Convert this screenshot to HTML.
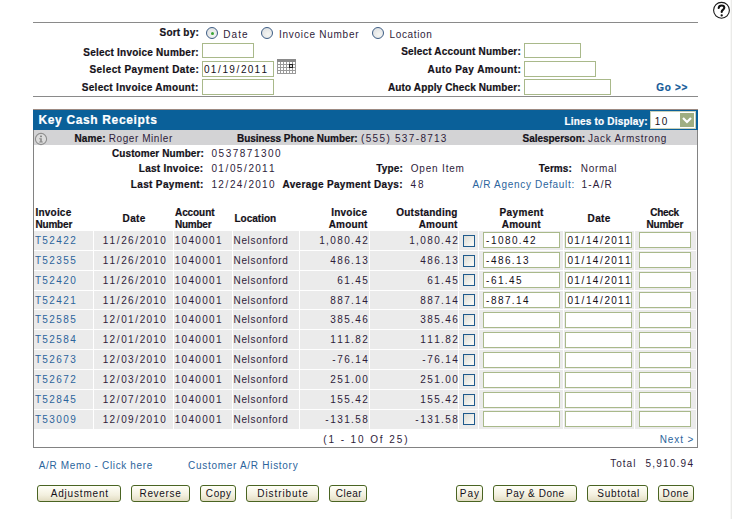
<!DOCTYPE html><html><head><meta charset="utf-8"><style>
html,body{margin:0;padding:0;background:#fff;width:732px;height:519px;overflow:hidden;position:relative}
*{box-sizing:border-box}
.t{position:absolute;font-family:"Liberation Sans",sans-serif;line-height:20px;white-space:pre}
.b{position:absolute}
.inp{position:absolute;border:1px solid #a9b98a;background:#fff}
.cb{position:absolute;width:12px;height:12px;border:1px solid #1f5a8c;background:linear-gradient(135deg,#dcdcd6,#f6f6f2 80%)}
.btn{position:absolute;height:17px;border:1px solid #4a6422;border-radius:3px;background:linear-gradient(#fffff8,#f3f0df 60%,#e2dcc2)}
.cell{position:absolute;background:#ebebeb}
.rad{position:absolute;width:12px;height:12px;border-radius:50%;border:1px solid #3d5d84;background:radial-gradient(circle at 60% 65%,#f6f6f2,#d8dce0)}
</style></head><body>

<div class="b" style="left:731px;top:0;width:1px;height:519px;background:#ebebe9"></div><div class="b" style="left:730px;top:0;width:1px;height:519px;background:#f8f8f7"></div>
<svg style="position:absolute;left:712px;top:1px" width="20" height="20"><circle cx="9.5" cy="9.3" r="7.9" fill="#fff" stroke="#1a1a1a" stroke-width="1.1"/><path d="M6.7 7.0 C6.9 5.1 8.2 4.5 9.6 4.5 C11.2 4.5 12.3 5.5 12.3 6.8 C12.3 8.5 10.0 8.6 9.7 10.6 L9.7 10.9" fill="none" stroke="#111" stroke-width="2.1" stroke-linecap="round"/><circle cx="9.7" cy="14.4" r="1.15" fill="#111"/></svg>
<div class="b" style="left:33px;top:22px;width:665px;height:1px;background:#8a8a8a"></div>
<div class="b" style="left:33px;top:96px;width:665px;height:1px;background:#8a8a8a"></div>
<div class="rad" style="left:206px;top:27px"></div>
<div class="b" style="left:210.5px;top:31.5px;width:3px;height:3px;border-radius:50%;background:#3aa534"></div>
<div class="rad" style="left:261px;top:27px"></div>
<div class="rad" style="left:372px;top:27px"></div>
<div class="inp" style="left:202px;top:43px;width:52px;height:15px"></div>
<div class="inp" style="left:202px;top:61px;width:72px;height:16px"></div>
<div class="inp" style="left:202px;top:79px;width:72px;height:16px"></div>
<div class="inp" style="left:524px;top:43px;width:57px;height:15px"></div>
<div class="inp" style="left:524px;top:61px;width:72px;height:16px"></div>
<div class="inp" style="left:524px;top:79px;width:87px;height:16px"></div>
<svg style="position:absolute;left:277px;top:59px" width="19" height="15" shape-rendering="crispEdges"><rect x="0" y="0" width="19" height="15" fill="#9a9a9a"/><rect x="0" y="0" width="19" height="3" fill="#8a8a8a"/><rect x="1" y="3" width="2" height="2" fill="#fff"/><rect x="1" y="6" width="2" height="2" fill="#fff"/><rect x="1" y="9" width="2" height="2" fill="#fff"/><rect x="1" y="12" width="2" height="2" fill="#fff"/><rect x="4" y="3" width="2" height="2" fill="#fff"/><rect x="4" y="6" width="2" height="2" fill="#fff"/><rect x="4" y="9" width="2" height="2" fill="#fff"/><rect x="4" y="12" width="2" height="2" fill="#fff"/><rect x="7" y="3" width="2" height="2" fill="#fff"/><rect x="7" y="6" width="2" height="2" fill="#fff"/><rect x="7" y="9" width="2" height="2" fill="#fff"/><rect x="7" y="12" width="2" height="2" fill="#fff"/><rect x="10" y="3" width="2" height="2" fill="#fff"/><rect x="10" y="6" width="2" height="2" fill="#fff"/><rect x="10" y="9" width="2" height="2" fill="#fff"/><rect x="10" y="12" width="2" height="2" fill="#fff"/><rect x="13" y="3" width="2" height="2" fill="#fff"/><rect x="13" y="6" width="2" height="2" fill="#fff"/><rect x="13" y="9" width="2" height="2" fill="#fff"/><rect x="13" y="12" width="2" height="2" fill="#fff"/><rect x="16" y="3" width="2" height="2" fill="#fff"/><rect x="16" y="6" width="2" height="2" fill="#fff"/><rect x="16" y="9" width="2" height="2" fill="#fff"/><rect x="16" y="12" width="2" height="2" fill="#fff"/><rect x="12" y="5" width="4" height="4" fill="#222"/><rect x="13" y="6" width="2" height="2" fill="#ddd"/></svg>
<div class="b" style="left:33px;top:109px;width:665px;height:339px;border:1px solid #828282;border-top:none"></div>
<div class="b" style="left:33px;top:109px;width:665px;height:21px;background:#0a6099"></div>
<div class="b" style="left:33px;top:109px;width:665px;height:1px;background:#9c8a82"></div>
<div class="b" style="left:34px;top:130px;width:663px;height:15px;background:#d3d3d5"></div>
<div class="b" style="left:650px;top:111px;width:46px;height:18px;background:#fff;border:1px solid #c8d0b8"></div>
<div class="b" style="left:680px;top:113px;width:14px;height:14px;background:#9fae82"></div>
<svg class="b" style="position:absolute;left:680px;top:113px" width="14" height="14"><path d="M3 5 L7 9 L11 5" stroke="#fff" stroke-width="2.2" fill="none"/></svg>
<svg style="position:absolute;left:34px;top:132px" width="14" height="14"><circle cx="7" cy="7" r="5.6" fill="#dcdcdc" stroke="#8e8e8e" stroke-width="1.1"/><rect x="6" y="3.6" width="2" height="1.6" fill="#8a8a8a"/><path d="M5.2 6.2 H7.8 V9.6 H8.8 V10.6 H5.2 V9.6 H6.2 V7.2 H5.2 Z" fill="#8a8a8a"/></svg>
<div class="cell" style="left:34px;top:231px;width:59px;height:19px"></div>
<div class="cell" style="left:94px;top:231px;width:79px;height:19px"></div>
<div class="cell" style="left:174px;top:231px;width:58px;height:19px"></div>
<div class="cell" style="left:233px;top:231px;width:66px;height:19px"></div>
<div class="cell" style="left:300px;top:231px;width:69px;height:19px"></div>
<div class="cell" style="left:370px;top:231px;width:88px;height:19px"></div>
<div class="cell" style="left:459px;top:231px;width:19px;height:19px"></div>
<div class="cell" style="left:479px;top:231px;width:84px;height:19px"></div>
<div class="cell" style="left:564px;top:231px;width:70px;height:19px"></div>
<div class="cell" style="left:635px;top:231px;width:61px;height:19px"></div>
<div class="cb" style="left:463px;top:235px"></div>
<div class="inp" style="left:483px;top:232px;width:77px;height:16px"></div>
<div class="inp" style="left:565px;top:232px;width:67px;height:16px"></div>
<div class="inp" style="left:639px;top:232px;width:52px;height:16px"></div>
<div class="cell" style="left:34px;top:251px;width:59px;height:19px"></div>
<div class="cell" style="left:94px;top:251px;width:79px;height:19px"></div>
<div class="cell" style="left:174px;top:251px;width:58px;height:19px"></div>
<div class="cell" style="left:233px;top:251px;width:66px;height:19px"></div>
<div class="cell" style="left:300px;top:251px;width:69px;height:19px"></div>
<div class="cell" style="left:370px;top:251px;width:88px;height:19px"></div>
<div class="cell" style="left:459px;top:251px;width:19px;height:19px"></div>
<div class="cell" style="left:479px;top:251px;width:84px;height:19px"></div>
<div class="cell" style="left:564px;top:251px;width:70px;height:19px"></div>
<div class="cell" style="left:635px;top:251px;width:61px;height:19px"></div>
<div class="cb" style="left:463px;top:255px"></div>
<div class="inp" style="left:483px;top:252px;width:77px;height:16px"></div>
<div class="inp" style="left:565px;top:252px;width:67px;height:16px"></div>
<div class="inp" style="left:639px;top:252px;width:52px;height:16px"></div>
<div class="cell" style="left:34px;top:271px;width:59px;height:19px"></div>
<div class="cell" style="left:94px;top:271px;width:79px;height:19px"></div>
<div class="cell" style="left:174px;top:271px;width:58px;height:19px"></div>
<div class="cell" style="left:233px;top:271px;width:66px;height:19px"></div>
<div class="cell" style="left:300px;top:271px;width:69px;height:19px"></div>
<div class="cell" style="left:370px;top:271px;width:88px;height:19px"></div>
<div class="cell" style="left:459px;top:271px;width:19px;height:19px"></div>
<div class="cell" style="left:479px;top:271px;width:84px;height:19px"></div>
<div class="cell" style="left:564px;top:271px;width:70px;height:19px"></div>
<div class="cell" style="left:635px;top:271px;width:61px;height:19px"></div>
<div class="cb" style="left:463px;top:274px"></div>
<div class="inp" style="left:483px;top:272px;width:77px;height:16px"></div>
<div class="inp" style="left:565px;top:272px;width:67px;height:16px"></div>
<div class="inp" style="left:639px;top:272px;width:52px;height:16px"></div>
<div class="cell" style="left:34px;top:291px;width:59px;height:18px"></div>
<div class="cell" style="left:94px;top:291px;width:79px;height:18px"></div>
<div class="cell" style="left:174px;top:291px;width:58px;height:18px"></div>
<div class="cell" style="left:233px;top:291px;width:66px;height:18px"></div>
<div class="cell" style="left:300px;top:291px;width:69px;height:18px"></div>
<div class="cell" style="left:370px;top:291px;width:88px;height:18px"></div>
<div class="cell" style="left:459px;top:291px;width:19px;height:18px"></div>
<div class="cell" style="left:479px;top:291px;width:84px;height:18px"></div>
<div class="cell" style="left:564px;top:291px;width:70px;height:18px"></div>
<div class="cell" style="left:635px;top:291px;width:61px;height:18px"></div>
<div class="cb" style="left:463px;top:294px"></div>
<div class="inp" style="left:483px;top:292px;width:77px;height:16px"></div>
<div class="inp" style="left:565px;top:292px;width:67px;height:16px"></div>
<div class="inp" style="left:639px;top:292px;width:52px;height:16px"></div>
<div class="cell" style="left:34px;top:310px;width:59px;height:19px"></div>
<div class="cell" style="left:94px;top:310px;width:79px;height:19px"></div>
<div class="cell" style="left:174px;top:310px;width:58px;height:19px"></div>
<div class="cell" style="left:233px;top:310px;width:66px;height:19px"></div>
<div class="cell" style="left:300px;top:310px;width:69px;height:19px"></div>
<div class="cell" style="left:370px;top:310px;width:88px;height:19px"></div>
<div class="cell" style="left:459px;top:310px;width:19px;height:19px"></div>
<div class="cell" style="left:479px;top:310px;width:84px;height:19px"></div>
<div class="cell" style="left:564px;top:310px;width:70px;height:19px"></div>
<div class="cell" style="left:635px;top:310px;width:61px;height:19px"></div>
<div class="cb" style="left:463px;top:314px"></div>
<div class="inp" style="left:483px;top:312px;width:77px;height:16px"></div>
<div class="inp" style="left:565px;top:312px;width:67px;height:16px"></div>
<div class="inp" style="left:639px;top:312px;width:52px;height:16px"></div>
<div class="cell" style="left:34px;top:330px;width:59px;height:19px"></div>
<div class="cell" style="left:94px;top:330px;width:79px;height:19px"></div>
<div class="cell" style="left:174px;top:330px;width:58px;height:19px"></div>
<div class="cell" style="left:233px;top:330px;width:66px;height:19px"></div>
<div class="cell" style="left:300px;top:330px;width:69px;height:19px"></div>
<div class="cell" style="left:370px;top:330px;width:88px;height:19px"></div>
<div class="cell" style="left:459px;top:330px;width:19px;height:19px"></div>
<div class="cell" style="left:479px;top:330px;width:84px;height:19px"></div>
<div class="cell" style="left:564px;top:330px;width:70px;height:19px"></div>
<div class="cell" style="left:635px;top:330px;width:61px;height:19px"></div>
<div class="cb" style="left:463px;top:334px"></div>
<div class="inp" style="left:483px;top:332px;width:77px;height:16px"></div>
<div class="inp" style="left:565px;top:332px;width:67px;height:16px"></div>
<div class="inp" style="left:639px;top:332px;width:52px;height:16px"></div>
<div class="cell" style="left:34px;top:350px;width:59px;height:19px"></div>
<div class="cell" style="left:94px;top:350px;width:79px;height:19px"></div>
<div class="cell" style="left:174px;top:350px;width:58px;height:19px"></div>
<div class="cell" style="left:233px;top:350px;width:66px;height:19px"></div>
<div class="cell" style="left:300px;top:350px;width:69px;height:19px"></div>
<div class="cell" style="left:370px;top:350px;width:88px;height:19px"></div>
<div class="cell" style="left:459px;top:350px;width:19px;height:19px"></div>
<div class="cell" style="left:479px;top:350px;width:84px;height:19px"></div>
<div class="cell" style="left:564px;top:350px;width:70px;height:19px"></div>
<div class="cell" style="left:635px;top:350px;width:61px;height:19px"></div>
<div class="cb" style="left:463px;top:354px"></div>
<div class="inp" style="left:483px;top:352px;width:77px;height:16px"></div>
<div class="inp" style="left:565px;top:352px;width:67px;height:16px"></div>
<div class="inp" style="left:639px;top:352px;width:52px;height:16px"></div>
<div class="cell" style="left:34px;top:370px;width:59px;height:19px"></div>
<div class="cell" style="left:94px;top:370px;width:79px;height:19px"></div>
<div class="cell" style="left:174px;top:370px;width:58px;height:19px"></div>
<div class="cell" style="left:233px;top:370px;width:66px;height:19px"></div>
<div class="cell" style="left:300px;top:370px;width:69px;height:19px"></div>
<div class="cell" style="left:370px;top:370px;width:88px;height:19px"></div>
<div class="cell" style="left:459px;top:370px;width:19px;height:19px"></div>
<div class="cell" style="left:479px;top:370px;width:84px;height:19px"></div>
<div class="cell" style="left:564px;top:370px;width:70px;height:19px"></div>
<div class="cell" style="left:635px;top:370px;width:61px;height:19px"></div>
<div class="cb" style="left:463px;top:374px"></div>
<div class="inp" style="left:483px;top:372px;width:77px;height:16px"></div>
<div class="inp" style="left:565px;top:372px;width:67px;height:16px"></div>
<div class="inp" style="left:639px;top:372px;width:52px;height:16px"></div>
<div class="cell" style="left:34px;top:390px;width:59px;height:19px"></div>
<div class="cell" style="left:94px;top:390px;width:79px;height:19px"></div>
<div class="cell" style="left:174px;top:390px;width:58px;height:19px"></div>
<div class="cell" style="left:233px;top:390px;width:66px;height:19px"></div>
<div class="cell" style="left:300px;top:390px;width:69px;height:19px"></div>
<div class="cell" style="left:370px;top:390px;width:88px;height:19px"></div>
<div class="cell" style="left:459px;top:390px;width:19px;height:19px"></div>
<div class="cell" style="left:479px;top:390px;width:84px;height:19px"></div>
<div class="cell" style="left:564px;top:390px;width:70px;height:19px"></div>
<div class="cell" style="left:635px;top:390px;width:61px;height:19px"></div>
<div class="cb" style="left:463px;top:394px"></div>
<div class="inp" style="left:483px;top:392px;width:77px;height:16px"></div>
<div class="inp" style="left:565px;top:392px;width:67px;height:16px"></div>
<div class="inp" style="left:639px;top:392px;width:52px;height:16px"></div>
<div class="cell" style="left:34px;top:410px;width:59px;height:19px"></div>
<div class="cell" style="left:94px;top:410px;width:79px;height:19px"></div>
<div class="cell" style="left:174px;top:410px;width:58px;height:19px"></div>
<div class="cell" style="left:233px;top:410px;width:66px;height:19px"></div>
<div class="cell" style="left:300px;top:410px;width:69px;height:19px"></div>
<div class="cell" style="left:370px;top:410px;width:88px;height:19px"></div>
<div class="cell" style="left:459px;top:410px;width:19px;height:19px"></div>
<div class="cell" style="left:479px;top:410px;width:84px;height:19px"></div>
<div class="cell" style="left:564px;top:410px;width:70px;height:19px"></div>
<div class="cell" style="left:635px;top:410px;width:61px;height:19px"></div>
<div class="cb" style="left:463px;top:413px"></div>
<div class="inp" style="left:483px;top:411px;width:77px;height:16px"></div>
<div class="inp" style="left:565px;top:411px;width:67px;height:16px"></div>
<div class="inp" style="left:639px;top:411px;width:52px;height:16px"></div>
<div class="btn" style="left:37px;top:485px;width:84px"></div>
<div class="btn" style="left:131px;top:485px;width:59px"></div>
<div class="btn" style="left:200px;top:485px;width:36px"></div>
<div class="btn" style="left:246px;top:485px;width:73px"></div>
<div class="btn" style="left:329px;top:485px;width:38px"></div>
<div class="btn" style="left:456px;top:485px;width:27px"></div>
<div class="btn" style="left:493px;top:485px;width:84px"></div>
<div class="btn" style="left:587px;top:485px;width:61px"></div>
<div class="btn" style="left:658px;top:485px;width:36px"></div>
<div style="position:absolute;left:159.50px;top:23.25px;font-family:'Liberation Sans';font-size:10px;line-height:20px;white-space:pre;color:#141018;font-weight:bold;-webkit-text-stroke:0.2px #141018;letter-spacing:0.214px;">Sort by:</div>
<div style="position:absolute;left:223.25px;top:24.50px;font-family:'Liberation Sans';font-size:10px;line-height:20px;white-space:pre;color:#2e1c3a;letter-spacing:1.083px;">Date</div>
<div style="position:absolute;left:279.00px;top:25.00px;font-family:'Liberation Sans';font-size:10px;line-height:20px;white-space:pre;color:#2e1c3a;letter-spacing:0.731px;">Invoice Number</div>
<div style="position:absolute;left:389.50px;top:25.00px;font-family:'Liberation Sans';font-size:10px;line-height:20px;white-space:pre;color:#2e1c3a;letter-spacing:0.643px;">Location</div>
<div style="position:absolute;left:83.25px;top:42.50px;font-family:'Liberation Sans';font-size:10px;line-height:20px;white-space:pre;color:#141018;font-weight:bold;-webkit-text-stroke:0.2px #141018;letter-spacing:0.226px;">Select Invoice Number:</div>
<div style="position:absolute;left:89.50px;top:60.25px;font-family:'Liberation Sans';font-size:10px;line-height:20px;white-space:pre;color:#141018;font-weight:bold;-webkit-text-stroke:0.2px #141018;letter-spacing:0.395px;">Select Payment Date:</div>
<div style="position:absolute;left:81.75px;top:78.25px;font-family:'Liberation Sans';font-size:10px;line-height:20px;white-space:pre;color:#141018;font-weight:bold;-webkit-text-stroke:0.2px #141018;letter-spacing:0.298px;">Select Invoice Amount:</div>
<div style="position:absolute;left:401.25px;top:42.00px;font-family:'Liberation Sans';font-size:10px;line-height:20px;white-space:pre;color:#141018;font-weight:bold;-webkit-text-stroke:0.2px #141018;letter-spacing:0.179px;">Select Account Number:</div>
<div style="position:absolute;left:427.50px;top:60.00px;font-family:'Liberation Sans';font-size:10px;line-height:20px;white-space:pre;color:#141018;font-weight:bold;-webkit-text-stroke:0.2px #141018;letter-spacing:0.433px;">Auto Pay Amount:</div>
<div style="position:absolute;left:388.00px;top:78.25px;font-family:'Liberation Sans';font-size:10px;line-height:20px;white-space:pre;color:#141018;font-weight:bold;-webkit-text-stroke:0.2px #141018;letter-spacing:0.130px;">Auto Apply Check Number:</div>
<div style="position:absolute;left:203.25px;top:59.50px;font-family:'Liberation Sans';font-size:10px;line-height:20px;white-space:pre;color:#141018;"><span style="display:inline-block;width:6.836px;text-align:center">0</span><span style="display:inline-block;width:6.836px;text-align:center">1</span><span style="display:inline-block;width:4.883px;text-align:center">/</span><span style="display:inline-block;width:6.836px;text-align:center">1</span><span style="display:inline-block;width:6.836px;text-align:center">9</span><span style="display:inline-block;width:4.883px;text-align:center">/</span><span style="display:inline-block;width:6.836px;text-align:center">2</span><span style="display:inline-block;width:6.836px;text-align:center">0</span><span style="display:inline-block;width:6.836px;text-align:center">1</span><span style="display:inline-block;width:6.836px;text-align:center">1</span></div>
<div style="position:absolute;left:656.25px;top:77.75px;font-family:'Liberation Sans';font-size:10px;line-height:20px;white-space:pre;color:#145a98;font-weight:bold;-webkit-text-stroke:0.2px #145a98;letter-spacing:0.688px;">Go &gt;&gt;</div>
<div style="position:absolute;left:38.50px;top:110.25px;font-family:'Liberation Sans';font-size:12px;line-height:20px;white-space:pre;color:#ffffff;font-weight:bold;-webkit-text-stroke:0.2px #ffffff;letter-spacing:0.641px;">Key Cash Receipts</div>
<div style="position:absolute;left:564.50px;top:112.00px;font-family:'Liberation Sans';font-size:10px;line-height:20px;white-space:pre;color:#ffffff;font-weight:bold;-webkit-text-stroke:0.2px #ffffff;letter-spacing:0.188px;">Lines to Display:</div>
<div style="position:absolute;left:654.00px;top:111.60px;font-family:'Liberation Sans';font-size:10px;line-height:20px;white-space:pre;color:#141018;"><span style="display:inline-block;width:7.000px;text-align:center">1</span><span style="display:inline-block;width:7.000px;text-align:center">0</span></div>
<div style="position:absolute;left:74.50px;top:128.75px;font-family:'Liberation Sans';font-size:10px;line-height:20px;white-space:pre;color:#141018;font-weight:bold;-webkit-text-stroke:0.2px #141018;letter-spacing:0.125px;">Name:</div>
<div style="position:absolute;left:108.75px;top:128.75px;font-family:'Liberation Sans';font-size:10px;line-height:20px;white-space:pre;color:#2e1c3a;letter-spacing:0.568px;">Roger Minler</div>
<div style="position:absolute;left:237.00px;top:128.75px;font-family:'Liberation Sans';font-size:10px;line-height:20px;white-space:pre;color:#141018;font-weight:bold;-webkit-text-stroke:0.2px #141018;letter-spacing:-0.048px;">Business Phone Number:</div>
<div style="position:absolute;left:360.25px;top:128.75px;font-family:'Liberation Sans';font-size:10px;line-height:20px;white-space:pre;color:#2e1c3a;"><span style="display:inline-block;width:4.885px;text-align:center">(</span><span style="display:inline-block;width:6.839px;text-align:center">5</span><span style="display:inline-block;width:6.839px;text-align:center">5</span><span style="display:inline-block;width:6.839px;text-align:center">5</span><span style="display:inline-block;width:4.885px;text-align:center">)</span><span style="display:inline-block;width:3.908px;text-align:center"> </span><span style="display:inline-block;width:6.839px;text-align:center">5</span><span style="display:inline-block;width:6.839px;text-align:center">3</span><span style="display:inline-block;width:6.839px;text-align:center">7</span><span style="display:inline-block;width:4.885px;text-align:center">-</span><span style="display:inline-block;width:6.839px;text-align:center">8</span><span style="display:inline-block;width:6.839px;text-align:center">7</span><span style="display:inline-block;width:6.839px;text-align:center">1</span><span style="display:inline-block;width:6.839px;text-align:center">3</span></div>
<div style="position:absolute;left:522.50px;top:128.75px;font-family:'Liberation Sans';font-size:10px;line-height:20px;white-space:pre;color:#141018;font-weight:bold;-webkit-text-stroke:0.2px #141018;letter-spacing:-0.023px;">Salesperson:</div>
<div style="position:absolute;left:588.00px;top:128.75px;font-family:'Liberation Sans';font-size:10px;line-height:20px;white-space:pre;color:#2e1c3a;letter-spacing:0.731px;">Jack Armstrong</div>
<div style="position:absolute;left:112.00px;top:143.75px;font-family:'Liberation Sans';font-size:10px;line-height:20px;white-space:pre;color:#141018;font-weight:bold;-webkit-text-stroke:0.2px #141018;letter-spacing:0.083px;">Customer Number:</div>
<div style="position:absolute;left:210.75px;top:144.00px;font-family:'Liberation Sans';font-size:10px;line-height:20px;white-space:pre;color:#2e1c3a;"><span style="display:inline-block;width:7.077px;text-align:center">0</span><span style="display:inline-block;width:7.077px;text-align:center">5</span><span style="display:inline-block;width:7.077px;text-align:center">3</span><span style="display:inline-block;width:7.077px;text-align:center">7</span><span style="display:inline-block;width:7.077px;text-align:center">8</span><span style="display:inline-block;width:7.077px;text-align:center">7</span><span style="display:inline-block;width:7.077px;text-align:center">1</span><span style="display:inline-block;width:7.077px;text-align:center">3</span><span style="display:inline-block;width:7.077px;text-align:center">0</span><span style="display:inline-block;width:7.077px;text-align:center">0</span></div>
<div style="position:absolute;left:138.75px;top:159.00px;font-family:'Liberation Sans';font-size:10px;line-height:20px;white-space:pre;color:#141018;font-weight:bold;-webkit-text-stroke:0.2px #141018;letter-spacing:0.271px;">Last Invoice:</div>
<div style="position:absolute;left:210.75px;top:159.00px;font-family:'Liberation Sans';font-size:10px;line-height:20px;white-space:pre;color:#2e1c3a;"><span style="display:inline-block;width:6.836px;text-align:center">0</span><span style="display:inline-block;width:6.836px;text-align:center">1</span><span style="display:inline-block;width:4.883px;text-align:center">/</span><span style="display:inline-block;width:6.836px;text-align:center">0</span><span style="display:inline-block;width:6.836px;text-align:center">5</span><span style="display:inline-block;width:4.883px;text-align:center">/</span><span style="display:inline-block;width:6.836px;text-align:center">2</span><span style="display:inline-block;width:6.836px;text-align:center">0</span><span style="display:inline-block;width:6.836px;text-align:center">1</span><span style="display:inline-block;width:6.836px;text-align:center">1</span></div>
<div style="position:absolute;left:376.25px;top:159.00px;font-family:'Liberation Sans';font-size:10px;line-height:20px;white-space:pre;color:#141018;font-weight:bold;-webkit-text-stroke:0.2px #141018;letter-spacing:0.188px;">Type:</div>
<div style="position:absolute;left:410.75px;top:159.00px;font-family:'Liberation Sans';font-size:10px;line-height:20px;white-space:pre;color:#2e1c3a;letter-spacing:0.812px;">Open Item</div>
<div style="position:absolute;left:538.75px;top:159.00px;font-family:'Liberation Sans';font-size:10px;line-height:20px;white-space:pre;color:#141018;font-weight:bold;-webkit-text-stroke:0.2px #141018;letter-spacing:0.100px;">Terms:</div>
<div style="position:absolute;left:580.75px;top:159.00px;font-family:'Liberation Sans';font-size:10px;line-height:20px;white-space:pre;color:#2e1c3a;letter-spacing:0.700px;">Normal</div>
<div style="position:absolute;left:130.75px;top:175.00px;font-family:'Liberation Sans';font-size:10px;line-height:20px;white-space:pre;color:#141018;font-weight:bold;-webkit-text-stroke:0.2px #141018;letter-spacing:0.354px;">Last Payment:</div>
<div style="position:absolute;left:210.75px;top:175.00px;font-family:'Liberation Sans';font-size:10px;line-height:20px;white-space:pre;color:#2e1c3a;"><span style="display:inline-block;width:6.836px;text-align:center">1</span><span style="display:inline-block;width:6.836px;text-align:center">2</span><span style="display:inline-block;width:4.883px;text-align:center">/</span><span style="display:inline-block;width:6.836px;text-align:center">2</span><span style="display:inline-block;width:6.836px;text-align:center">4</span><span style="display:inline-block;width:4.883px;text-align:center">/</span><span style="display:inline-block;width:6.836px;text-align:center">2</span><span style="display:inline-block;width:6.836px;text-align:center">0</span><span style="display:inline-block;width:6.836px;text-align:center">1</span><span style="display:inline-block;width:6.836px;text-align:center">0</span></div>
<div style="position:absolute;left:282.50px;top:175.00px;font-family:'Liberation Sans';font-size:10px;line-height:20px;white-space:pre;color:#141018;font-weight:bold;-webkit-text-stroke:0.2px #141018;letter-spacing:0.325px;">Average Payment Days:</div>
<div style="position:absolute;left:409.75px;top:175.00px;font-family:'Liberation Sans';font-size:10px;line-height:20px;white-space:pre;color:#2e1c3a;"><span style="display:inline-block;width:7.292px;text-align:center">4</span><span style="display:inline-block;width:7.292px;text-align:center">8</span></div>
<div style="position:absolute;left:472.50px;top:174.50px;font-family:'Liberation Sans';font-size:10px;line-height:20px;white-space:pre;color:#2b649c;letter-spacing:0.681px;">A/R Agency Default:</div>
<div style="position:absolute;left:581.50px;top:175.00px;font-family:'Liberation Sans';font-size:10px;line-height:20px;white-space:pre;color:#2e1c3a;letter-spacing:1.188px;">1-A/R</div>
<div style="position:absolute;left:35.50px;top:202.75px;font-family:'Liberation Sans';font-size:10px;line-height:20px;white-space:pre;color:#141018;font-weight:bold;-webkit-text-stroke:0.2px #141018;letter-spacing:0.208px;">Invoice</div>
<div style="position:absolute;left:35.50px;top:214.50px;font-family:'Liberation Sans';font-size:10px;line-height:20px;white-space:pre;color:#141018;font-weight:bold;-webkit-text-stroke:0.2px #141018;letter-spacing:-0.200px;">Number</div>
<div style="position:absolute;left:122.50px;top:209.00px;font-family:'Liberation Sans';font-size:10px;line-height:20px;white-space:pre;color:#141018;font-weight:bold;-webkit-text-stroke:0.2px #141018;letter-spacing:0.417px;">Date</div>
<div style="position:absolute;left:175.00px;top:202.75px;font-family:'Liberation Sans';font-size:10px;line-height:20px;white-space:pre;color:#141018;font-weight:bold;-webkit-text-stroke:0.2px #141018;letter-spacing:-0.083px;">Account</div>
<div style="position:absolute;left:175.00px;top:214.50px;font-family:'Liberation Sans';font-size:10px;line-height:20px;white-space:pre;color:#141018;font-weight:bold;-webkit-text-stroke:0.2px #141018;letter-spacing:-0.250px;">Number</div>
<div style="position:absolute;left:234.50px;top:209.00px;font-family:'Liberation Sans';font-size:10px;line-height:20px;white-space:pre;color:#141018;font-weight:bold;-webkit-text-stroke:0.2px #141018;letter-spacing:0.000px;">Location</div>
<div style="position:absolute;left:331.25px;top:202.75px;font-family:'Liberation Sans';font-size:10px;line-height:20px;white-space:pre;color:#141018;font-weight:bold;-webkit-text-stroke:0.2px #141018;letter-spacing:0.208px;">Invoice</div>
<div style="position:absolute;left:328.75px;top:214.50px;font-family:'Liberation Sans';font-size:10px;line-height:20px;white-space:pre;color:#141018;font-weight:bold;-webkit-text-stroke:0.2px #141018;letter-spacing:0.150px;">Amount</div>
<div style="position:absolute;left:396.25px;top:202.75px;font-family:'Liberation Sans';font-size:10px;line-height:20px;white-space:pre;color:#141018;font-weight:bold;-webkit-text-stroke:0.2px #141018;letter-spacing:0.225px;">Outstanding</div>
<div style="position:absolute;left:418.75px;top:214.50px;font-family:'Liberation Sans';font-size:10px;line-height:20px;white-space:pre;color:#141018;font-weight:bold;-webkit-text-stroke:0.2px #141018;letter-spacing:0.150px;">Amount</div>
<div style="position:absolute;left:499.50px;top:202.75px;font-family:'Liberation Sans';font-size:10px;line-height:20px;white-space:pre;color:#141018;font-weight:bold;-webkit-text-stroke:0.2px #141018;letter-spacing:0.375px;">Payment</div>
<div style="position:absolute;left:501.75px;top:214.50px;font-family:'Liberation Sans';font-size:10px;line-height:20px;white-space:pre;color:#141018;font-weight:bold;-webkit-text-stroke:0.2px #141018;letter-spacing:0.200px;">Amount</div>
<div style="position:absolute;left:587.50px;top:209.00px;font-family:'Liberation Sans';font-size:10px;line-height:20px;white-space:pre;color:#141018;font-weight:bold;-webkit-text-stroke:0.2px #141018;letter-spacing:0.417px;">Date</div>
<div style="position:absolute;left:650.25px;top:202.75px;font-family:'Liberation Sans';font-size:10px;line-height:20px;white-space:pre;color:#141018;font-weight:bold;-webkit-text-stroke:0.2px #141018;letter-spacing:-0.312px;">Check</div>
<div style="position:absolute;left:646.50px;top:214.50px;font-family:'Liberation Sans';font-size:10px;line-height:20px;white-space:pre;color:#141018;font-weight:bold;-webkit-text-stroke:0.2px #141018;letter-spacing:-0.200px;">Number</div>
<div style="position:absolute;left:34.50px;top:230.75px;font-family:'Liberation Sans';font-size:10px;line-height:20px;white-space:pre;color:#2b649c;"><span style="display:inline-block;width:7.000px;text-align:center">T</span><span style="display:inline-block;width:7.000px;text-align:center">5</span><span style="display:inline-block;width:7.000px;text-align:center">2</span><span style="display:inline-block;width:7.000px;text-align:center">4</span><span style="display:inline-block;width:7.000px;text-align:center">2</span><span style="display:inline-block;width:7.000px;text-align:center">2</span></div>
<div style="position:absolute;left:102.00px;top:230.75px;font-family:'Liberation Sans';font-size:10px;line-height:20px;white-space:pre;color:#2e1c3a;"><span style="display:inline-block;width:6.836px;text-align:center">1</span><span style="display:inline-block;width:6.836px;text-align:center">1</span><span style="display:inline-block;width:4.883px;text-align:center">/</span><span style="display:inline-block;width:6.836px;text-align:center">2</span><span style="display:inline-block;width:6.836px;text-align:center">6</span><span style="display:inline-block;width:4.883px;text-align:center">/</span><span style="display:inline-block;width:6.836px;text-align:center">2</span><span style="display:inline-block;width:6.836px;text-align:center">0</span><span style="display:inline-block;width:6.836px;text-align:center">1</span><span style="display:inline-block;width:6.836px;text-align:center">0</span></div>
<div style="position:absolute;left:174.00px;top:230.75px;font-family:'Liberation Sans';font-size:10px;line-height:20px;white-space:pre;color:#2e1c3a;"><span style="display:inline-block;width:6.888px;text-align:center">1</span><span style="display:inline-block;width:6.888px;text-align:center">0</span><span style="display:inline-block;width:6.888px;text-align:center">4</span><span style="display:inline-block;width:6.888px;text-align:center">0</span><span style="display:inline-block;width:6.888px;text-align:center">0</span><span style="display:inline-block;width:6.888px;text-align:center">0</span><span style="display:inline-block;width:6.888px;text-align:center">1</span></div>
<div style="position:absolute;left:233.50px;top:230.75px;font-family:'Liberation Sans';font-size:10px;line-height:20px;white-space:pre;color:#2e1c3a;letter-spacing:0.667px;">Nelsonford</div>
<div style="position:absolute;left:318.50px;top:230.75px;font-family:'Liberation Sans';font-size:10px;line-height:20px;white-space:pre;color:#2e1c3a;"><span style="display:inline-block;width:7.000px;text-align:center">1</span><span style="display:inline-block;width:4.000px;text-align:center">,</span><span style="display:inline-block;width:7.000px;text-align:center">0</span><span style="display:inline-block;width:7.000px;text-align:center">8</span><span style="display:inline-block;width:7.000px;text-align:center">0</span><span style="display:inline-block;width:4.000px;text-align:center">.</span><span style="display:inline-block;width:7.000px;text-align:center">4</span><span style="display:inline-block;width:7.000px;text-align:center">2</span></div>
<div style="position:absolute;left:408.50px;top:230.75px;font-family:'Liberation Sans';font-size:10px;line-height:20px;white-space:pre;color:#2e1c3a;"><span style="display:inline-block;width:7.000px;text-align:center">1</span><span style="display:inline-block;width:4.000px;text-align:center">,</span><span style="display:inline-block;width:7.000px;text-align:center">0</span><span style="display:inline-block;width:7.000px;text-align:center">8</span><span style="display:inline-block;width:7.000px;text-align:center">0</span><span style="display:inline-block;width:4.000px;text-align:center">.</span><span style="display:inline-block;width:7.000px;text-align:center">4</span><span style="display:inline-block;width:7.000px;text-align:center">2</span></div>
<div style="position:absolute;left:485.25px;top:230.75px;font-family:'Liberation Sans';font-size:10px;line-height:20px;white-space:pre;color:#141018;"><span style="display:inline-block;width:5.000px;text-align:center">-</span><span style="display:inline-block;width:7.000px;text-align:center">1</span><span style="display:inline-block;width:7.000px;text-align:center">0</span><span style="display:inline-block;width:7.000px;text-align:center">8</span><span style="display:inline-block;width:7.000px;text-align:center">0</span><span style="display:inline-block;width:4.000px;text-align:center">.</span><span style="display:inline-block;width:7.000px;text-align:center">4</span><span style="display:inline-block;width:7.000px;text-align:center">2</span></div>
<div style="position:absolute;left:566.75px;top:230.75px;font-family:'Liberation Sans';font-size:10px;line-height:20px;white-space:pre;color:#141018;"><span style="display:inline-block;width:6.836px;text-align:center">0</span><span style="display:inline-block;width:6.836px;text-align:center">1</span><span style="display:inline-block;width:4.883px;text-align:center">/</span><span style="display:inline-block;width:6.836px;text-align:center">1</span><span style="display:inline-block;width:6.836px;text-align:center">4</span><span style="display:inline-block;width:4.883px;text-align:center">/</span><span style="display:inline-block;width:6.836px;text-align:center">2</span><span style="display:inline-block;width:6.836px;text-align:center">0</span><span style="display:inline-block;width:6.836px;text-align:center">1</span><span style="display:inline-block;width:6.836px;text-align:center">1</span></div>
<div style="position:absolute;left:34.50px;top:250.75px;font-family:'Liberation Sans';font-size:10px;line-height:20px;white-space:pre;color:#2b649c;"><span style="display:inline-block;width:7.000px;text-align:center">T</span><span style="display:inline-block;width:7.000px;text-align:center">5</span><span style="display:inline-block;width:7.000px;text-align:center">2</span><span style="display:inline-block;width:7.000px;text-align:center">3</span><span style="display:inline-block;width:7.000px;text-align:center">5</span><span style="display:inline-block;width:7.000px;text-align:center">5</span></div>
<div style="position:absolute;left:102.00px;top:250.75px;font-family:'Liberation Sans';font-size:10px;line-height:20px;white-space:pre;color:#2e1c3a;"><span style="display:inline-block;width:6.836px;text-align:center">1</span><span style="display:inline-block;width:6.836px;text-align:center">1</span><span style="display:inline-block;width:4.883px;text-align:center">/</span><span style="display:inline-block;width:6.836px;text-align:center">2</span><span style="display:inline-block;width:6.836px;text-align:center">6</span><span style="display:inline-block;width:4.883px;text-align:center">/</span><span style="display:inline-block;width:6.836px;text-align:center">2</span><span style="display:inline-block;width:6.836px;text-align:center">0</span><span style="display:inline-block;width:6.836px;text-align:center">1</span><span style="display:inline-block;width:6.836px;text-align:center">0</span></div>
<div style="position:absolute;left:174.00px;top:250.75px;font-family:'Liberation Sans';font-size:10px;line-height:20px;white-space:pre;color:#2e1c3a;"><span style="display:inline-block;width:6.888px;text-align:center">1</span><span style="display:inline-block;width:6.888px;text-align:center">0</span><span style="display:inline-block;width:6.888px;text-align:center">4</span><span style="display:inline-block;width:6.888px;text-align:center">0</span><span style="display:inline-block;width:6.888px;text-align:center">0</span><span style="display:inline-block;width:6.888px;text-align:center">0</span><span style="display:inline-block;width:6.888px;text-align:center">1</span></div>
<div style="position:absolute;left:233.50px;top:250.75px;font-family:'Liberation Sans';font-size:10px;line-height:20px;white-space:pre;color:#2e1c3a;letter-spacing:0.667px;">Nelsonford</div>
<div style="position:absolute;left:329.50px;top:250.75px;font-family:'Liberation Sans';font-size:10px;line-height:20px;white-space:pre;color:#2e1c3a;"><span style="display:inline-block;width:7.000px;text-align:center">4</span><span style="display:inline-block;width:7.000px;text-align:center">8</span><span style="display:inline-block;width:7.000px;text-align:center">6</span><span style="display:inline-block;width:4.000px;text-align:center">.</span><span style="display:inline-block;width:7.000px;text-align:center">1</span><span style="display:inline-block;width:7.000px;text-align:center">3</span></div>
<div style="position:absolute;left:419.50px;top:250.75px;font-family:'Liberation Sans';font-size:10px;line-height:20px;white-space:pre;color:#2e1c3a;"><span style="display:inline-block;width:7.000px;text-align:center">4</span><span style="display:inline-block;width:7.000px;text-align:center">8</span><span style="display:inline-block;width:7.000px;text-align:center">6</span><span style="display:inline-block;width:4.000px;text-align:center">.</span><span style="display:inline-block;width:7.000px;text-align:center">1</span><span style="display:inline-block;width:7.000px;text-align:center">3</span></div>
<div style="position:absolute;left:485.25px;top:250.75px;font-family:'Liberation Sans';font-size:10px;line-height:20px;white-space:pre;color:#141018;"><span style="display:inline-block;width:5.000px;text-align:center">-</span><span style="display:inline-block;width:7.000px;text-align:center">4</span><span style="display:inline-block;width:7.000px;text-align:center">8</span><span style="display:inline-block;width:7.000px;text-align:center">6</span><span style="display:inline-block;width:4.000px;text-align:center">.</span><span style="display:inline-block;width:7.000px;text-align:center">1</span><span style="display:inline-block;width:7.000px;text-align:center">3</span></div>
<div style="position:absolute;left:566.75px;top:250.75px;font-family:'Liberation Sans';font-size:10px;line-height:20px;white-space:pre;color:#141018;"><span style="display:inline-block;width:6.836px;text-align:center">0</span><span style="display:inline-block;width:6.836px;text-align:center">1</span><span style="display:inline-block;width:4.883px;text-align:center">/</span><span style="display:inline-block;width:6.836px;text-align:center">1</span><span style="display:inline-block;width:6.836px;text-align:center">4</span><span style="display:inline-block;width:4.883px;text-align:center">/</span><span style="display:inline-block;width:6.836px;text-align:center">2</span><span style="display:inline-block;width:6.836px;text-align:center">0</span><span style="display:inline-block;width:6.836px;text-align:center">1</span><span style="display:inline-block;width:6.836px;text-align:center">1</span></div>
<div style="position:absolute;left:34.50px;top:270.75px;font-family:'Liberation Sans';font-size:10px;line-height:20px;white-space:pre;color:#2b649c;"><span style="display:inline-block;width:7.000px;text-align:center">T</span><span style="display:inline-block;width:7.000px;text-align:center">5</span><span style="display:inline-block;width:7.000px;text-align:center">2</span><span style="display:inline-block;width:7.000px;text-align:center">4</span><span style="display:inline-block;width:7.000px;text-align:center">2</span><span style="display:inline-block;width:7.000px;text-align:center">0</span></div>
<div style="position:absolute;left:102.00px;top:270.75px;font-family:'Liberation Sans';font-size:10px;line-height:20px;white-space:pre;color:#2e1c3a;"><span style="display:inline-block;width:6.836px;text-align:center">1</span><span style="display:inline-block;width:6.836px;text-align:center">1</span><span style="display:inline-block;width:4.883px;text-align:center">/</span><span style="display:inline-block;width:6.836px;text-align:center">2</span><span style="display:inline-block;width:6.836px;text-align:center">6</span><span style="display:inline-block;width:4.883px;text-align:center">/</span><span style="display:inline-block;width:6.836px;text-align:center">2</span><span style="display:inline-block;width:6.836px;text-align:center">0</span><span style="display:inline-block;width:6.836px;text-align:center">1</span><span style="display:inline-block;width:6.836px;text-align:center">0</span></div>
<div style="position:absolute;left:174.00px;top:270.75px;font-family:'Liberation Sans';font-size:10px;line-height:20px;white-space:pre;color:#2e1c3a;"><span style="display:inline-block;width:6.888px;text-align:center">1</span><span style="display:inline-block;width:6.888px;text-align:center">0</span><span style="display:inline-block;width:6.888px;text-align:center">4</span><span style="display:inline-block;width:6.888px;text-align:center">0</span><span style="display:inline-block;width:6.888px;text-align:center">0</span><span style="display:inline-block;width:6.888px;text-align:center">0</span><span style="display:inline-block;width:6.888px;text-align:center">1</span></div>
<div style="position:absolute;left:233.50px;top:270.75px;font-family:'Liberation Sans';font-size:10px;line-height:20px;white-space:pre;color:#2e1c3a;letter-spacing:0.667px;">Nelsonford</div>
<div style="position:absolute;left:336.50px;top:270.75px;font-family:'Liberation Sans';font-size:10px;line-height:20px;white-space:pre;color:#2e1c3a;"><span style="display:inline-block;width:7.000px;text-align:center">6</span><span style="display:inline-block;width:7.000px;text-align:center">1</span><span style="display:inline-block;width:4.000px;text-align:center">.</span><span style="display:inline-block;width:7.000px;text-align:center">4</span><span style="display:inline-block;width:7.000px;text-align:center">5</span></div>
<div style="position:absolute;left:426.50px;top:270.75px;font-family:'Liberation Sans';font-size:10px;line-height:20px;white-space:pre;color:#2e1c3a;"><span style="display:inline-block;width:7.000px;text-align:center">6</span><span style="display:inline-block;width:7.000px;text-align:center">1</span><span style="display:inline-block;width:4.000px;text-align:center">.</span><span style="display:inline-block;width:7.000px;text-align:center">4</span><span style="display:inline-block;width:7.000px;text-align:center">5</span></div>
<div style="position:absolute;left:485.25px;top:270.75px;font-family:'Liberation Sans';font-size:10px;line-height:20px;white-space:pre;color:#141018;"><span style="display:inline-block;width:5.000px;text-align:center">-</span><span style="display:inline-block;width:7.000px;text-align:center">6</span><span style="display:inline-block;width:7.000px;text-align:center">1</span><span style="display:inline-block;width:4.000px;text-align:center">.</span><span style="display:inline-block;width:7.000px;text-align:center">4</span><span style="display:inline-block;width:7.000px;text-align:center">5</span></div>
<div style="position:absolute;left:566.75px;top:270.75px;font-family:'Liberation Sans';font-size:10px;line-height:20px;white-space:pre;color:#141018;"><span style="display:inline-block;width:6.836px;text-align:center">0</span><span style="display:inline-block;width:6.836px;text-align:center">1</span><span style="display:inline-block;width:4.883px;text-align:center">/</span><span style="display:inline-block;width:6.836px;text-align:center">1</span><span style="display:inline-block;width:6.836px;text-align:center">4</span><span style="display:inline-block;width:4.883px;text-align:center">/</span><span style="display:inline-block;width:6.836px;text-align:center">2</span><span style="display:inline-block;width:6.836px;text-align:center">0</span><span style="display:inline-block;width:6.836px;text-align:center">1</span><span style="display:inline-block;width:6.836px;text-align:center">1</span></div>
<div style="position:absolute;left:34.50px;top:290.75px;font-family:'Liberation Sans';font-size:10px;line-height:20px;white-space:pre;color:#2b649c;"><span style="display:inline-block;width:7.000px;text-align:center">T</span><span style="display:inline-block;width:7.000px;text-align:center">5</span><span style="display:inline-block;width:7.000px;text-align:center">2</span><span style="display:inline-block;width:7.000px;text-align:center">4</span><span style="display:inline-block;width:7.000px;text-align:center">2</span><span style="display:inline-block;width:7.000px;text-align:center">1</span></div>
<div style="position:absolute;left:102.00px;top:290.75px;font-family:'Liberation Sans';font-size:10px;line-height:20px;white-space:pre;color:#2e1c3a;"><span style="display:inline-block;width:6.836px;text-align:center">1</span><span style="display:inline-block;width:6.836px;text-align:center">1</span><span style="display:inline-block;width:4.883px;text-align:center">/</span><span style="display:inline-block;width:6.836px;text-align:center">2</span><span style="display:inline-block;width:6.836px;text-align:center">6</span><span style="display:inline-block;width:4.883px;text-align:center">/</span><span style="display:inline-block;width:6.836px;text-align:center">2</span><span style="display:inline-block;width:6.836px;text-align:center">0</span><span style="display:inline-block;width:6.836px;text-align:center">1</span><span style="display:inline-block;width:6.836px;text-align:center">0</span></div>
<div style="position:absolute;left:174.00px;top:290.75px;font-family:'Liberation Sans';font-size:10px;line-height:20px;white-space:pre;color:#2e1c3a;"><span style="display:inline-block;width:6.888px;text-align:center">1</span><span style="display:inline-block;width:6.888px;text-align:center">0</span><span style="display:inline-block;width:6.888px;text-align:center">4</span><span style="display:inline-block;width:6.888px;text-align:center">0</span><span style="display:inline-block;width:6.888px;text-align:center">0</span><span style="display:inline-block;width:6.888px;text-align:center">0</span><span style="display:inline-block;width:6.888px;text-align:center">1</span></div>
<div style="position:absolute;left:233.50px;top:290.75px;font-family:'Liberation Sans';font-size:10px;line-height:20px;white-space:pre;color:#2e1c3a;letter-spacing:0.667px;">Nelsonford</div>
<div style="position:absolute;left:329.50px;top:290.75px;font-family:'Liberation Sans';font-size:10px;line-height:20px;white-space:pre;color:#2e1c3a;"><span style="display:inline-block;width:7.000px;text-align:center">8</span><span style="display:inline-block;width:7.000px;text-align:center">8</span><span style="display:inline-block;width:7.000px;text-align:center">7</span><span style="display:inline-block;width:4.000px;text-align:center">.</span><span style="display:inline-block;width:7.000px;text-align:center">1</span><span style="display:inline-block;width:7.000px;text-align:center">4</span></div>
<div style="position:absolute;left:419.50px;top:290.75px;font-family:'Liberation Sans';font-size:10px;line-height:20px;white-space:pre;color:#2e1c3a;"><span style="display:inline-block;width:7.000px;text-align:center">8</span><span style="display:inline-block;width:7.000px;text-align:center">8</span><span style="display:inline-block;width:7.000px;text-align:center">7</span><span style="display:inline-block;width:4.000px;text-align:center">.</span><span style="display:inline-block;width:7.000px;text-align:center">1</span><span style="display:inline-block;width:7.000px;text-align:center">4</span></div>
<div style="position:absolute;left:485.25px;top:290.75px;font-family:'Liberation Sans';font-size:10px;line-height:20px;white-space:pre;color:#141018;"><span style="display:inline-block;width:5.000px;text-align:center">-</span><span style="display:inline-block;width:7.000px;text-align:center">8</span><span style="display:inline-block;width:7.000px;text-align:center">8</span><span style="display:inline-block;width:7.000px;text-align:center">7</span><span style="display:inline-block;width:4.000px;text-align:center">.</span><span style="display:inline-block;width:7.000px;text-align:center">1</span><span style="display:inline-block;width:7.000px;text-align:center">4</span></div>
<div style="position:absolute;left:566.75px;top:290.75px;font-family:'Liberation Sans';font-size:10px;line-height:20px;white-space:pre;color:#141018;"><span style="display:inline-block;width:6.836px;text-align:center">0</span><span style="display:inline-block;width:6.836px;text-align:center">1</span><span style="display:inline-block;width:4.883px;text-align:center">/</span><span style="display:inline-block;width:6.836px;text-align:center">1</span><span style="display:inline-block;width:6.836px;text-align:center">4</span><span style="display:inline-block;width:4.883px;text-align:center">/</span><span style="display:inline-block;width:6.836px;text-align:center">2</span><span style="display:inline-block;width:6.836px;text-align:center">0</span><span style="display:inline-block;width:6.836px;text-align:center">1</span><span style="display:inline-block;width:6.836px;text-align:center">1</span></div>
<div style="position:absolute;left:34.50px;top:309.75px;font-family:'Liberation Sans';font-size:10px;line-height:20px;white-space:pre;color:#2b649c;"><span style="display:inline-block;width:7.000px;text-align:center">T</span><span style="display:inline-block;width:7.000px;text-align:center">5</span><span style="display:inline-block;width:7.000px;text-align:center">2</span><span style="display:inline-block;width:7.000px;text-align:center">5</span><span style="display:inline-block;width:7.000px;text-align:center">8</span><span style="display:inline-block;width:7.000px;text-align:center">5</span></div>
<div style="position:absolute;left:102.00px;top:309.75px;font-family:'Liberation Sans';font-size:10px;line-height:20px;white-space:pre;color:#2e1c3a;"><span style="display:inline-block;width:6.836px;text-align:center">1</span><span style="display:inline-block;width:6.836px;text-align:center">2</span><span style="display:inline-block;width:4.883px;text-align:center">/</span><span style="display:inline-block;width:6.836px;text-align:center">0</span><span style="display:inline-block;width:6.836px;text-align:center">1</span><span style="display:inline-block;width:4.883px;text-align:center">/</span><span style="display:inline-block;width:6.836px;text-align:center">2</span><span style="display:inline-block;width:6.836px;text-align:center">0</span><span style="display:inline-block;width:6.836px;text-align:center">1</span><span style="display:inline-block;width:6.836px;text-align:center">0</span></div>
<div style="position:absolute;left:174.00px;top:309.75px;font-family:'Liberation Sans';font-size:10px;line-height:20px;white-space:pre;color:#2e1c3a;"><span style="display:inline-block;width:6.888px;text-align:center">1</span><span style="display:inline-block;width:6.888px;text-align:center">0</span><span style="display:inline-block;width:6.888px;text-align:center">4</span><span style="display:inline-block;width:6.888px;text-align:center">0</span><span style="display:inline-block;width:6.888px;text-align:center">0</span><span style="display:inline-block;width:6.888px;text-align:center">0</span><span style="display:inline-block;width:6.888px;text-align:center">1</span></div>
<div style="position:absolute;left:233.50px;top:309.75px;font-family:'Liberation Sans';font-size:10px;line-height:20px;white-space:pre;color:#2e1c3a;letter-spacing:0.667px;">Nelsonford</div>
<div style="position:absolute;left:329.50px;top:309.75px;font-family:'Liberation Sans';font-size:10px;line-height:20px;white-space:pre;color:#2e1c3a;"><span style="display:inline-block;width:7.000px;text-align:center">3</span><span style="display:inline-block;width:7.000px;text-align:center">8</span><span style="display:inline-block;width:7.000px;text-align:center">5</span><span style="display:inline-block;width:4.000px;text-align:center">.</span><span style="display:inline-block;width:7.000px;text-align:center">4</span><span style="display:inline-block;width:7.000px;text-align:center">6</span></div>
<div style="position:absolute;left:419.50px;top:309.75px;font-family:'Liberation Sans';font-size:10px;line-height:20px;white-space:pre;color:#2e1c3a;"><span style="display:inline-block;width:7.000px;text-align:center">3</span><span style="display:inline-block;width:7.000px;text-align:center">8</span><span style="display:inline-block;width:7.000px;text-align:center">5</span><span style="display:inline-block;width:4.000px;text-align:center">.</span><span style="display:inline-block;width:7.000px;text-align:center">4</span><span style="display:inline-block;width:7.000px;text-align:center">6</span></div>
<div style="position:absolute;left:34.50px;top:329.75px;font-family:'Liberation Sans';font-size:10px;line-height:20px;white-space:pre;color:#2b649c;"><span style="display:inline-block;width:7.000px;text-align:center">T</span><span style="display:inline-block;width:7.000px;text-align:center">5</span><span style="display:inline-block;width:7.000px;text-align:center">2</span><span style="display:inline-block;width:7.000px;text-align:center">5</span><span style="display:inline-block;width:7.000px;text-align:center">8</span><span style="display:inline-block;width:7.000px;text-align:center">4</span></div>
<div style="position:absolute;left:102.00px;top:329.75px;font-family:'Liberation Sans';font-size:10px;line-height:20px;white-space:pre;color:#2e1c3a;"><span style="display:inline-block;width:6.836px;text-align:center">1</span><span style="display:inline-block;width:6.836px;text-align:center">2</span><span style="display:inline-block;width:4.883px;text-align:center">/</span><span style="display:inline-block;width:6.836px;text-align:center">0</span><span style="display:inline-block;width:6.836px;text-align:center">1</span><span style="display:inline-block;width:4.883px;text-align:center">/</span><span style="display:inline-block;width:6.836px;text-align:center">2</span><span style="display:inline-block;width:6.836px;text-align:center">0</span><span style="display:inline-block;width:6.836px;text-align:center">1</span><span style="display:inline-block;width:6.836px;text-align:center">0</span></div>
<div style="position:absolute;left:174.00px;top:329.75px;font-family:'Liberation Sans';font-size:10px;line-height:20px;white-space:pre;color:#2e1c3a;"><span style="display:inline-block;width:6.888px;text-align:center">1</span><span style="display:inline-block;width:6.888px;text-align:center">0</span><span style="display:inline-block;width:6.888px;text-align:center">4</span><span style="display:inline-block;width:6.888px;text-align:center">0</span><span style="display:inline-block;width:6.888px;text-align:center">0</span><span style="display:inline-block;width:6.888px;text-align:center">0</span><span style="display:inline-block;width:6.888px;text-align:center">1</span></div>
<div style="position:absolute;left:233.50px;top:329.75px;font-family:'Liberation Sans';font-size:10px;line-height:20px;white-space:pre;color:#2e1c3a;letter-spacing:0.667px;">Nelsonford</div>
<div style="position:absolute;left:329.50px;top:329.75px;font-family:'Liberation Sans';font-size:10px;line-height:20px;white-space:pre;color:#2e1c3a;"><span style="display:inline-block;width:7.000px;text-align:center">1</span><span style="display:inline-block;width:7.000px;text-align:center">1</span><span style="display:inline-block;width:7.000px;text-align:center">1</span><span style="display:inline-block;width:4.000px;text-align:center">.</span><span style="display:inline-block;width:7.000px;text-align:center">8</span><span style="display:inline-block;width:7.000px;text-align:center">2</span></div>
<div style="position:absolute;left:419.50px;top:329.75px;font-family:'Liberation Sans';font-size:10px;line-height:20px;white-space:pre;color:#2e1c3a;"><span style="display:inline-block;width:7.000px;text-align:center">1</span><span style="display:inline-block;width:7.000px;text-align:center">1</span><span style="display:inline-block;width:7.000px;text-align:center">1</span><span style="display:inline-block;width:4.000px;text-align:center">.</span><span style="display:inline-block;width:7.000px;text-align:center">8</span><span style="display:inline-block;width:7.000px;text-align:center">2</span></div>
<div style="position:absolute;left:34.50px;top:349.75px;font-family:'Liberation Sans';font-size:10px;line-height:20px;white-space:pre;color:#2b649c;"><span style="display:inline-block;width:7.000px;text-align:center">T</span><span style="display:inline-block;width:7.000px;text-align:center">5</span><span style="display:inline-block;width:7.000px;text-align:center">2</span><span style="display:inline-block;width:7.000px;text-align:center">6</span><span style="display:inline-block;width:7.000px;text-align:center">7</span><span style="display:inline-block;width:7.000px;text-align:center">3</span></div>
<div style="position:absolute;left:102.00px;top:349.75px;font-family:'Liberation Sans';font-size:10px;line-height:20px;white-space:pre;color:#2e1c3a;"><span style="display:inline-block;width:6.836px;text-align:center">1</span><span style="display:inline-block;width:6.836px;text-align:center">2</span><span style="display:inline-block;width:4.883px;text-align:center">/</span><span style="display:inline-block;width:6.836px;text-align:center">0</span><span style="display:inline-block;width:6.836px;text-align:center">3</span><span style="display:inline-block;width:4.883px;text-align:center">/</span><span style="display:inline-block;width:6.836px;text-align:center">2</span><span style="display:inline-block;width:6.836px;text-align:center">0</span><span style="display:inline-block;width:6.836px;text-align:center">1</span><span style="display:inline-block;width:6.836px;text-align:center">0</span></div>
<div style="position:absolute;left:174.00px;top:349.75px;font-family:'Liberation Sans';font-size:10px;line-height:20px;white-space:pre;color:#2e1c3a;"><span style="display:inline-block;width:6.888px;text-align:center">1</span><span style="display:inline-block;width:6.888px;text-align:center">0</span><span style="display:inline-block;width:6.888px;text-align:center">4</span><span style="display:inline-block;width:6.888px;text-align:center">0</span><span style="display:inline-block;width:6.888px;text-align:center">0</span><span style="display:inline-block;width:6.888px;text-align:center">0</span><span style="display:inline-block;width:6.888px;text-align:center">1</span></div>
<div style="position:absolute;left:233.50px;top:349.75px;font-family:'Liberation Sans';font-size:10px;line-height:20px;white-space:pre;color:#2e1c3a;letter-spacing:0.667px;">Nelsonford</div>
<div style="position:absolute;left:331.50px;top:349.75px;font-family:'Liberation Sans';font-size:10px;line-height:20px;white-space:pre;color:#2e1c3a;"><span style="display:inline-block;width:5.000px;text-align:center">-</span><span style="display:inline-block;width:7.000px;text-align:center">7</span><span style="display:inline-block;width:7.000px;text-align:center">6</span><span style="display:inline-block;width:4.000px;text-align:center">.</span><span style="display:inline-block;width:7.000px;text-align:center">1</span><span style="display:inline-block;width:7.000px;text-align:center">4</span></div>
<div style="position:absolute;left:421.50px;top:349.75px;font-family:'Liberation Sans';font-size:10px;line-height:20px;white-space:pre;color:#2e1c3a;"><span style="display:inline-block;width:5.000px;text-align:center">-</span><span style="display:inline-block;width:7.000px;text-align:center">7</span><span style="display:inline-block;width:7.000px;text-align:center">6</span><span style="display:inline-block;width:4.000px;text-align:center">.</span><span style="display:inline-block;width:7.000px;text-align:center">1</span><span style="display:inline-block;width:7.000px;text-align:center">4</span></div>
<div style="position:absolute;left:34.50px;top:369.75px;font-family:'Liberation Sans';font-size:10px;line-height:20px;white-space:pre;color:#2b649c;"><span style="display:inline-block;width:7.000px;text-align:center">T</span><span style="display:inline-block;width:7.000px;text-align:center">5</span><span style="display:inline-block;width:7.000px;text-align:center">2</span><span style="display:inline-block;width:7.000px;text-align:center">6</span><span style="display:inline-block;width:7.000px;text-align:center">7</span><span style="display:inline-block;width:7.000px;text-align:center">2</span></div>
<div style="position:absolute;left:102.00px;top:369.75px;font-family:'Liberation Sans';font-size:10px;line-height:20px;white-space:pre;color:#2e1c3a;"><span style="display:inline-block;width:6.836px;text-align:center">1</span><span style="display:inline-block;width:6.836px;text-align:center">2</span><span style="display:inline-block;width:4.883px;text-align:center">/</span><span style="display:inline-block;width:6.836px;text-align:center">0</span><span style="display:inline-block;width:6.836px;text-align:center">3</span><span style="display:inline-block;width:4.883px;text-align:center">/</span><span style="display:inline-block;width:6.836px;text-align:center">2</span><span style="display:inline-block;width:6.836px;text-align:center">0</span><span style="display:inline-block;width:6.836px;text-align:center">1</span><span style="display:inline-block;width:6.836px;text-align:center">0</span></div>
<div style="position:absolute;left:174.00px;top:369.75px;font-family:'Liberation Sans';font-size:10px;line-height:20px;white-space:pre;color:#2e1c3a;"><span style="display:inline-block;width:6.888px;text-align:center">1</span><span style="display:inline-block;width:6.888px;text-align:center">0</span><span style="display:inline-block;width:6.888px;text-align:center">4</span><span style="display:inline-block;width:6.888px;text-align:center">0</span><span style="display:inline-block;width:6.888px;text-align:center">0</span><span style="display:inline-block;width:6.888px;text-align:center">0</span><span style="display:inline-block;width:6.888px;text-align:center">1</span></div>
<div style="position:absolute;left:233.50px;top:369.75px;font-family:'Liberation Sans';font-size:10px;line-height:20px;white-space:pre;color:#2e1c3a;letter-spacing:0.667px;">Nelsonford</div>
<div style="position:absolute;left:329.50px;top:369.75px;font-family:'Liberation Sans';font-size:10px;line-height:20px;white-space:pre;color:#2e1c3a;"><span style="display:inline-block;width:7.000px;text-align:center">2</span><span style="display:inline-block;width:7.000px;text-align:center">5</span><span style="display:inline-block;width:7.000px;text-align:center">1</span><span style="display:inline-block;width:4.000px;text-align:center">.</span><span style="display:inline-block;width:7.000px;text-align:center">0</span><span style="display:inline-block;width:7.000px;text-align:center">0</span></div>
<div style="position:absolute;left:419.50px;top:369.75px;font-family:'Liberation Sans';font-size:10px;line-height:20px;white-space:pre;color:#2e1c3a;"><span style="display:inline-block;width:7.000px;text-align:center">2</span><span style="display:inline-block;width:7.000px;text-align:center">5</span><span style="display:inline-block;width:7.000px;text-align:center">1</span><span style="display:inline-block;width:4.000px;text-align:center">.</span><span style="display:inline-block;width:7.000px;text-align:center">0</span><span style="display:inline-block;width:7.000px;text-align:center">0</span></div>
<div style="position:absolute;left:34.50px;top:389.75px;font-family:'Liberation Sans';font-size:10px;line-height:20px;white-space:pre;color:#2b649c;"><span style="display:inline-block;width:7.000px;text-align:center">T</span><span style="display:inline-block;width:7.000px;text-align:center">5</span><span style="display:inline-block;width:7.000px;text-align:center">2</span><span style="display:inline-block;width:7.000px;text-align:center">8</span><span style="display:inline-block;width:7.000px;text-align:center">4</span><span style="display:inline-block;width:7.000px;text-align:center">5</span></div>
<div style="position:absolute;left:102.00px;top:389.75px;font-family:'Liberation Sans';font-size:10px;line-height:20px;white-space:pre;color:#2e1c3a;"><span style="display:inline-block;width:6.836px;text-align:center">1</span><span style="display:inline-block;width:6.836px;text-align:center">2</span><span style="display:inline-block;width:4.883px;text-align:center">/</span><span style="display:inline-block;width:6.836px;text-align:center">0</span><span style="display:inline-block;width:6.836px;text-align:center">7</span><span style="display:inline-block;width:4.883px;text-align:center">/</span><span style="display:inline-block;width:6.836px;text-align:center">2</span><span style="display:inline-block;width:6.836px;text-align:center">0</span><span style="display:inline-block;width:6.836px;text-align:center">1</span><span style="display:inline-block;width:6.836px;text-align:center">0</span></div>
<div style="position:absolute;left:174.00px;top:389.75px;font-family:'Liberation Sans';font-size:10px;line-height:20px;white-space:pre;color:#2e1c3a;"><span style="display:inline-block;width:6.888px;text-align:center">1</span><span style="display:inline-block;width:6.888px;text-align:center">0</span><span style="display:inline-block;width:6.888px;text-align:center">4</span><span style="display:inline-block;width:6.888px;text-align:center">0</span><span style="display:inline-block;width:6.888px;text-align:center">0</span><span style="display:inline-block;width:6.888px;text-align:center">0</span><span style="display:inline-block;width:6.888px;text-align:center">1</span></div>
<div style="position:absolute;left:233.50px;top:389.75px;font-family:'Liberation Sans';font-size:10px;line-height:20px;white-space:pre;color:#2e1c3a;letter-spacing:0.667px;">Nelsonford</div>
<div style="position:absolute;left:329.50px;top:389.75px;font-family:'Liberation Sans';font-size:10px;line-height:20px;white-space:pre;color:#2e1c3a;"><span style="display:inline-block;width:7.000px;text-align:center">1</span><span style="display:inline-block;width:7.000px;text-align:center">5</span><span style="display:inline-block;width:7.000px;text-align:center">5</span><span style="display:inline-block;width:4.000px;text-align:center">.</span><span style="display:inline-block;width:7.000px;text-align:center">4</span><span style="display:inline-block;width:7.000px;text-align:center">2</span></div>
<div style="position:absolute;left:419.50px;top:389.75px;font-family:'Liberation Sans';font-size:10px;line-height:20px;white-space:pre;color:#2e1c3a;"><span style="display:inline-block;width:7.000px;text-align:center">1</span><span style="display:inline-block;width:7.000px;text-align:center">5</span><span style="display:inline-block;width:7.000px;text-align:center">5</span><span style="display:inline-block;width:4.000px;text-align:center">.</span><span style="display:inline-block;width:7.000px;text-align:center">4</span><span style="display:inline-block;width:7.000px;text-align:center">2</span></div>
<div style="position:absolute;left:34.50px;top:409.75px;font-family:'Liberation Sans';font-size:10px;line-height:20px;white-space:pre;color:#2b649c;"><span style="display:inline-block;width:7.000px;text-align:center">T</span><span style="display:inline-block;width:7.000px;text-align:center">5</span><span style="display:inline-block;width:7.000px;text-align:center">3</span><span style="display:inline-block;width:7.000px;text-align:center">0</span><span style="display:inline-block;width:7.000px;text-align:center">0</span><span style="display:inline-block;width:7.000px;text-align:center">9</span></div>
<div style="position:absolute;left:102.00px;top:409.75px;font-family:'Liberation Sans';font-size:10px;line-height:20px;white-space:pre;color:#2e1c3a;"><span style="display:inline-block;width:6.836px;text-align:center">1</span><span style="display:inline-block;width:6.836px;text-align:center">2</span><span style="display:inline-block;width:4.883px;text-align:center">/</span><span style="display:inline-block;width:6.836px;text-align:center">0</span><span style="display:inline-block;width:6.836px;text-align:center">9</span><span style="display:inline-block;width:4.883px;text-align:center">/</span><span style="display:inline-block;width:6.836px;text-align:center">2</span><span style="display:inline-block;width:6.836px;text-align:center">0</span><span style="display:inline-block;width:6.836px;text-align:center">1</span><span style="display:inline-block;width:6.836px;text-align:center">0</span></div>
<div style="position:absolute;left:174.00px;top:409.75px;font-family:'Liberation Sans';font-size:10px;line-height:20px;white-space:pre;color:#2e1c3a;"><span style="display:inline-block;width:6.888px;text-align:center">1</span><span style="display:inline-block;width:6.888px;text-align:center">0</span><span style="display:inline-block;width:6.888px;text-align:center">4</span><span style="display:inline-block;width:6.888px;text-align:center">0</span><span style="display:inline-block;width:6.888px;text-align:center">0</span><span style="display:inline-block;width:6.888px;text-align:center">0</span><span style="display:inline-block;width:6.888px;text-align:center">1</span></div>
<div style="position:absolute;left:233.50px;top:409.75px;font-family:'Liberation Sans';font-size:10px;line-height:20px;white-space:pre;color:#2e1c3a;letter-spacing:0.667px;">Nelsonford</div>
<div style="position:absolute;left:324.50px;top:409.75px;font-family:'Liberation Sans';font-size:10px;line-height:20px;white-space:pre;color:#2e1c3a;"><span style="display:inline-block;width:5.000px;text-align:center">-</span><span style="display:inline-block;width:7.000px;text-align:center">1</span><span style="display:inline-block;width:7.000px;text-align:center">3</span><span style="display:inline-block;width:7.000px;text-align:center">1</span><span style="display:inline-block;width:4.000px;text-align:center">.</span><span style="display:inline-block;width:7.000px;text-align:center">5</span><span style="display:inline-block;width:7.000px;text-align:center">8</span></div>
<div style="position:absolute;left:414.50px;top:409.75px;font-family:'Liberation Sans';font-size:10px;line-height:20px;white-space:pre;color:#2e1c3a;"><span style="display:inline-block;width:5.000px;text-align:center">-</span><span style="display:inline-block;width:7.000px;text-align:center">1</span><span style="display:inline-block;width:7.000px;text-align:center">3</span><span style="display:inline-block;width:7.000px;text-align:center">1</span><span style="display:inline-block;width:4.000px;text-align:center">.</span><span style="display:inline-block;width:7.000px;text-align:center">5</span><span style="display:inline-block;width:7.000px;text-align:center">8</span></div>
<div style="position:absolute;left:323.25px;top:430.00px;font-family:'Liberation Sans';font-size:10px;line-height:20px;white-space:pre;color:#2e1c3a;letter-spacing:1.904px;">(1 - 10 Of 25)</div>
<div style="position:absolute;left:659.75px;top:430.00px;font-family:'Liberation Sans';font-size:10px;line-height:20px;white-space:pre;color:#2b649c;letter-spacing:0.900px;">Next &gt;</div>
<div style="position:absolute;left:38.75px;top:455.75px;font-family:'Liberation Sans';font-size:10px;line-height:20px;white-space:pre;color:#2b649c;letter-spacing:0.650px;">A/R Memo - Click here</div>
<div style="position:absolute;left:188.00px;top:455.50px;font-family:'Liberation Sans';font-size:10px;line-height:20px;white-space:pre;color:#2b649c;letter-spacing:0.711px;">Customer A/R History</div>
<div style="position:absolute;left:610.25px;top:453.75px;font-family:'Liberation Sans';font-size:10px;line-height:20px;white-space:pre;color:#2e1c3a;letter-spacing:1.000px;">Total</div>
<div style="position:absolute;left:644.75px;top:453.75px;font-family:'Liberation Sans';font-size:10px;line-height:20px;white-space:pre;color:#2e1c3a;"><span style="display:inline-block;width:6.854px;text-align:center">5</span><span style="display:inline-block;width:3.917px;text-align:center">,</span><span style="display:inline-block;width:6.854px;text-align:center">9</span><span style="display:inline-block;width:6.854px;text-align:center">1</span><span style="display:inline-block;width:6.854px;text-align:center">0</span><span style="display:inline-block;width:3.917px;text-align:center">.</span><span style="display:inline-block;width:6.854px;text-align:center">9</span><span style="display:inline-block;width:6.854px;text-align:center">4</span></div>
<div style="position:absolute;left:50.75px;top:484.00px;font-family:'Liberation Sans';font-size:10px;line-height:20px;white-space:pre;color:#141018;letter-spacing:0.806px;">Adjustment</div>
<div style="position:absolute;left:139.50px;top:484.00px;font-family:'Liberation Sans';font-size:10px;line-height:20px;white-space:pre;color:#141018;letter-spacing:0.667px;">Reverse</div>
<div style="position:absolute;left:205.75px;top:484.00px;font-family:'Liberation Sans';font-size:10px;line-height:20px;white-space:pre;color:#141018;letter-spacing:0.667px;">Copy</div>
<div style="position:absolute;left:257.25px;top:484.00px;font-family:'Liberation Sans';font-size:10px;line-height:20px;white-space:pre;color:#141018;letter-spacing:0.917px;">Distribute</div>
<div style="position:absolute;left:335.75px;top:484.00px;font-family:'Liberation Sans';font-size:10px;line-height:20px;white-space:pre;color:#141018;letter-spacing:0.500px;">Clear</div>
<div style="position:absolute;left:459.75px;top:484.00px;font-family:'Liberation Sans';font-size:10px;line-height:20px;white-space:pre;color:#141018;letter-spacing:1.000px;">Pay</div>
<div style="position:absolute;left:506.00px;top:484.00px;font-family:'Liberation Sans';font-size:10px;line-height:20px;white-space:pre;color:#141018;letter-spacing:0.528px;">Pay &amp; Done</div>
<div style="position:absolute;left:597.25px;top:484.00px;font-family:'Liberation Sans';font-size:10px;line-height:20px;white-space:pre;color:#141018;letter-spacing:0.750px;">Subtotal</div>
<div style="position:absolute;left:662.50px;top:484.00px;font-family:'Liberation Sans';font-size:10px;line-height:20px;white-space:pre;color:#141018;letter-spacing:0.667px;">Done</div>
</body></html>
